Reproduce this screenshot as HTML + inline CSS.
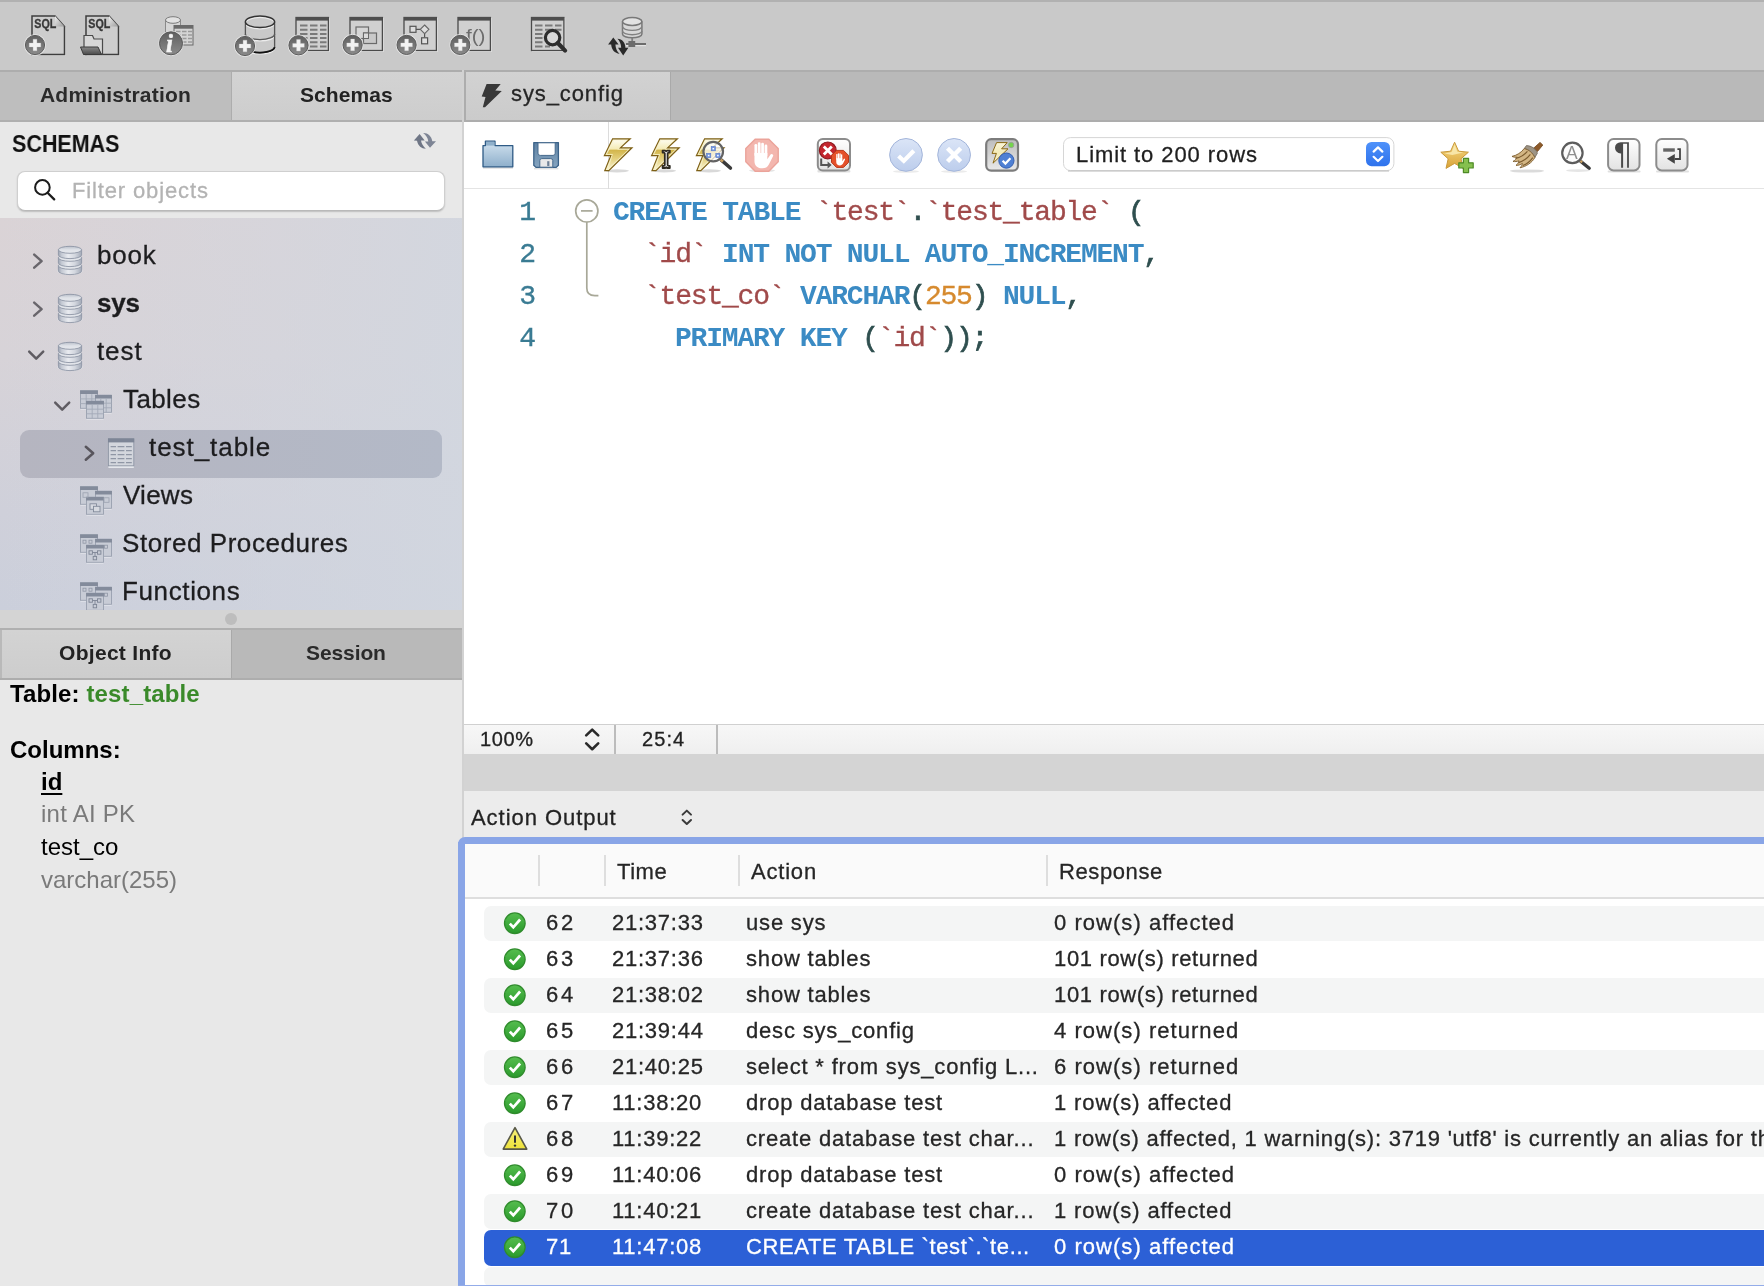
<!DOCTYPE html>
<html>
<head>
<meta charset="utf-8">
<title>MySQL Workbench</title>
<style>
*{box-sizing:border-box;margin:0;padding:0}
html,body{width:1764px;height:1286px;overflow:hidden;background:#e8e8e8}
body{font-family:"Liberation Sans",sans-serif;color:#222;position:relative}
.abs{position:absolute}
.t{position:absolute;white-space:nowrap;line-height:1}
#app{position:absolute;left:0;top:0;width:1764px;height:1286px;overflow:hidden}
.t,svg{will-change:transform}

/* top toolbar */
#topbar{left:0;top:0;width:1764px;height:70px;background:#c9c9c9;border-top:2px solid #b1b1b1}
#topline{left:0;top:70px;width:1764px;height:2px;background:#adadad}

/* side tabs */
#tabAdmin{left:0;top:72px;width:231px;height:48px;background:#bebebe}
#tabSchemas{left:232px;top:72px;width:230px;height:48px;background:linear-gradient(#d3d3d3,#cdcdcd)}
#tabSep{left:231px;top:72px;width:1px;height:48px;background:#adadad}
#sideTabLine{left:0;top:120px;width:462px;height:2px;background:#afafaf}

/* vertical splitter */
#vsplit{left:462px;top:70px;width:2px;height:1216px;background:#d2d2d2}
#vsplit2{left:464px;top:70px;width:2px;height:52px;background:#adadad}

/* editor tab bar */
#edTabBar{left:464px;top:72px;width:1300px;height:48px;background:#b9b9b9}
#edTab{left:466px;top:72px;width:205px;height:48px;background:linear-gradient(#d2d2d2,#cbcbcb);border-right:1px solid #a9a9a9}
#edTabLine{left:464px;top:120px;width:1300px;height:2px;background:#adadad}

/* editor toolbar */
#edTool{left:464px;top:122px;width:1300px;height:66px;background:#fff}
#edToolLine{left:464px;top:188px;width:1300px;height:2px;background:#e4e4e4}
#edToolV{left:608px;top:122px;width:1px;height:67px;background:#dcdcdc}

/* editor */
#editor{left:464px;top:189px;width:1300px;height:535px;background:#fff}
.code{font-family:"Liberation Mono",monospace;font-size:28px;letter-spacing:-1.2px}

/* editor status */
#edStatus{left:464px;top:724px;width:1300px;height:30px;background:linear-gradient(#f7f7f7,#efefef);border-top:1px solid #d0d0d0}
#gap{left:464px;top:754px;width:1300px;height:37px;background:#d4d4d4}
#aoBar{left:464px;top:791px;width:1300px;height:48px;background:#ececec}

/* output table */
#outBorderT{left:458px;top:837px;width:1306px;height:7px;background:#89a5e7;border-top-left-radius:8px}
#outBorderL{left:458px;top:842px;width:7px;height:444px;background:#89a5e7}
#outBorderB{left:458px;top:1284.500px;width:1306px;height:1.500px;background:#93ace9}
#outHead{left:465px;top:844px;width:1299px;height:55px;background:#fafafa;border-bottom:2px solid #dedede}
#outBody{left:465px;top:899px;width:1299px;height:387px;background:#fff}

/* sidebar */
#schemasHead{left:0;top:122px;width:462px;height:96px;background:#e8e8e8}
#tree{left:0;top:218px;width:462px;height:392px;background:linear-gradient(90deg,rgba(212,216,225,0) 0%,rgba(211,215,224,.5) 60%,rgba(210,215,224,.85) 100%),linear-gradient(180deg,#dad3d6 0%,#d7d3d8 35%,#cfd0da 75%,#cbcfdb 100%)}
#hsplit{left:0;top:610px;width:462px;height:18px;background:#d4d4d4}
#infoTabs{left:0;top:628px;width:462px;height:52px;background:#b9b9b9;border-top:2px solid #b0b0b0;border-bottom:2px solid #adadad}
#tabObj{left:2px;top:630px;width:229px;height:48px;background:linear-gradient(#d3d3d3,#cdcdcd)}
#info{left:0;top:680px;width:462px;height:606px;background:#e8e8e8}
.tr{font-size:26px;color:#1d1d1f}
.inf{font-size:24px}
.code{line-height:42px}
.ln{color:#3a7b93}
.k{color:#3b8bc4;font-weight:bold}
.i{color:#a04a4a}
.p{color:#2f4f4f}
.n{color:#d68a2e}
.cl{white-space:pre}
.ot{font-size:22px;color:#262626;letter-spacing:.45px}
.row{position:absolute;left:484px;width:1280px;height:36px;border-radius:7px 0 0 7px}
.ot,.tr,#tSysconfig,#tFilter,#tLimit,#tPct,#tPos,#tAO{-webkit-text-stroke:.3px currentColor}
.i,.n,.ln{-webkit-text-stroke:.35px currentColor}
.p{-webkit-text-stroke:.7px currentColor}
</style>
</head>
<body>
<div id="app">
<!-- TOPBAR -->
<div class="abs" id="topbar"></div>
<div class="abs" id="topline"></div>
<!-- SIDE TABS -->
<div class="abs" id="tabAdmin"></div>
<div class="abs" id="tabSchemas"></div>
<div class="abs" id="tabSep"></div>
<div class="abs" id="sideTabLine"></div>
<!-- EDITOR TABS -->
<div class="abs" id="edTabBar"></div>
<div class="abs" id="edTab"></div>
<div class="abs" id="edTabLine"></div>
<div class="abs" id="edTool"></div>
<div class="abs" id="edToolLine"></div>
<div class="abs" id="edToolV"></div>
<div class="abs" id="editor"></div>
<div class="abs" id="edStatus"></div>
<div class="abs" id="gap"></div>
<div class="abs" id="aoBar"></div>
<div class="abs" id="outHead"></div>
<div class="abs" id="outBody"></div>
<!-- SIDEBAR -->
<div class="abs" id="schemasHead"></div>
<div class="abs" id="tree"></div>
<div class="abs" id="hsplit"></div>
<div class="abs" id="infoTabs"></div>
<div class="abs" id="tabObj"></div>
<div class="abs" style="left:231px;top:630px;width:1px;height:48px;background:#a9a9a9"></div>
<div class="abs" id="info"></div>
<div class="abs" id="vsplit"></div>
<div class="abs" id="vsplit2"></div>
<div class="abs" id="outBorderT"></div>
<div class="abs" id="outBorderL"></div>

<svg class="abs" style="left:0;top:0" width="1764" height="70" viewBox="0 0 1764 70">
<defs>
<linearGradient id="pg" x1="0" y1="0" x2="0" y2="1"><stop offset="0" stop-color="#5f5f5f"/><stop offset="1" stop-color="#8b8b8b"/></linearGradient>
<linearGradient id="fold" x1="0" y1="0" x2="1" y2="1"><stop offset="0" stop-color="#efefef"/><stop offset="1" stop-color="#9a9a9a"/></linearGradient>
<linearGradient id="fd" x1="0" y1="0" x2="0" y2="1"><stop offset="0" stop-color="#8a8a8a"/><stop offset="1" stop-color="#4a4a4a"/></linearGradient>
</defs>
<!-- 1 SQL new -->
<g>
<path d="M32,16h23l9.5,10.5v28h-32.5z" fill="#cfcfcf" stroke="#e6e6e6" stroke-width="1" transform="translate(.8,.9)"/>
<path d="M32,16h23l9.5,10.5v28h-32.5z" fill="#cdcdcd" stroke="#3e3e3e" stroke-width="1.5"/>
<path d="M55,16v10.5h9.5z" fill="url(#fold)"/>
<text x="34.3" y="28.2" font-family="Liberation Sans" font-weight="bold" font-size="12.800" fill="#383838" stroke="#383838" stroke-width=".35" textLength="22" lengthAdjust="spacingAndGlyphs">SQL</text>
<g transform="translate(35,45)"><circle r="10.799999999999999" fill="#e9e9e9" opacity=".85"/><circle r="9.6" fill="url(#pg)" stroke="#5c5c5c" stroke-width="1"/><path d="M-1.9,-5.8h3.8v3.9h3.9v3.8h-3.9v3.9h-3.8v-3.9h-3.9v-3.8h3.9z" fill="#f2f2f2" stroke="#d0d0d0" stroke-width=".3"/></g>
</g>
<!-- 2 SQL open -->
<g>
<path d="M86,16h23l9.5,10.5v28h-32.5z" fill="#cfcfcf" stroke="#e6e6e6" stroke-width="1" transform="translate(.8,.9)"/>
<path d="M86,16h23l9.5,10.5v28h-32.5z" fill="#cdcdcd" stroke="#3e3e3e" stroke-width="1.5"/>
<path d="M109,16v10.5h9.5z" fill="url(#fold)"/>
<text x="88.3" y="28.2" font-family="Liberation Sans" font-weight="bold" font-size="12.800" fill="#383838" stroke="#383838" stroke-width=".35" textLength="22" lengthAdjust="spacingAndGlyphs">SQL</text>
<path d="M84,35.5h8.5l1.5,3.5h8.5v15h-18.5z" fill="#d8d8d8" stroke="#4a4a4a" stroke-width="1.2"/>
<path d="M80.5,47h17.5l3.5,7.5h-18z" fill="url(#fd)" stroke="#3a3a3a" stroke-width="1"/>
</g>
<!-- 3 info -->
<g>
<path d="M165.5,20v18a7.5,3.2 0 0 0 15,0v-18" fill="#d6d6d6" stroke="#8a8a8a" stroke-width="1"/>
<ellipse cx="173" cy="20" rx="7.5" ry="3.3" fill="#e2e2e2" stroke="#7a7a7a" stroke-width="1"/>
<rect x="174" y="25.5" width="19" height="19.5" fill="#d4d4d4" stroke="#6a6a6a" stroke-width="1"/>
<rect x="174" y="25.5" width="19" height="3.2" fill="#6a6a6a"/>
<g stroke="#9a9a9a" stroke-width="1.6"><path d="M176,31.5h4.5M182,31.5h4.5M188,31.5h4M176,35h4.5M182,35h4.5M188,35h4M176,38.5h4.5M182,38.5h4.5M188,38.5h4M182,42h4.5M188,42h4"/></g>
<circle cx="171" cy="43.3" r="12.6" fill="#e6e6e6" opacity=".8"/>
<circle cx="171" cy="43.3" r="11.5" fill="url(#pg)" stroke="#5a5a5a" stroke-width="1"/>
<text x="166" y="51.800" font-family="Liberation Serif" font-style="italic" font-weight="bold" font-size="25" fill="#f4f4f4" stroke="#f4f4f4" stroke-width=".5">i</text>
</g>
<!-- 4 DB + -->
<g fill="none">
<g stroke="#ececec" stroke-width="1.4" transform="translate(0,1.3)"><ellipse cx="260" cy="21.8" rx="14.6" ry="5.8"/><path d="M245.4,34a14.6,5.6 0 0 0 29.2,0"/><path d="M245.4,47a14.6,5.6 0 0 0 29.2,0"/></g>
<path d="M245.4,21.8v25.4a14.6,5.6 0 0 0 29.2,0v-25.4" stroke="#555" stroke-width="1.3"/>
<ellipse cx="260" cy="21.8" rx="14.6" ry="5.8" stroke="#333" stroke-width="1.5"/>
<path d="M245.4,34a14.6,5.6 0 0 0 29.2,0" stroke="#5a5a5a" stroke-width="1.4"/>
<path d="M252,51.6a14.6,5.6 0 0 0 22.6,-4.4" stroke="#111" stroke-width="1.8"/>
</g>
<g transform="translate(245,46)"><circle r="10.799999999999999" fill="#e9e9e9" opacity=".85"/><circle r="9.6" fill="url(#pg)" stroke="#5c5c5c" stroke-width="1"/><path d="M-1.9,-5.8h3.8v3.9h3.9v3.8h-3.9v3.9h-3.8v-3.9h-3.9v-3.8h3.9z" fill="#f2f2f2" stroke="#d0d0d0" stroke-width=".3"/></g>
<!-- 5 table + -->
<g>
<rect x="296" y="17.5" width="32.400" height="33" fill="#d2d2d2" stroke="#e8e8e8" stroke-width="1" transform="translate(.8,.9)"/>
<rect x="296" y="17.5" width="32.400" height="33" fill="#d0d0d0" stroke="#4a4a4a" stroke-width="1.3"/>
<rect x="296" y="17" width="32.400" height="3.600" fill="#4e4e4e"/>
<g stroke="#7a7a7a" stroke-width="2"><path d="M300,25.5h7.5M310,25.5h7.5M320,25.5h6.5M300,29.7h7.5M310,29.7h7.5M320,29.7h6.5M300,33.9h7.5M310,33.9h7.5M320,33.9h6.5M300,38.1h7.5M310,38.1h7.5M320,38.1h6.5M310,42.3h7.5M320,42.3h6.5M310,46.5h7.5M320,46.5h6.5"/></g>
</g>
<g transform="translate(298.5,45.3)"><circle r="10.799999999999999" fill="#e9e9e9" opacity=".85"/><circle r="9.6" fill="url(#pg)" stroke="#5c5c5c" stroke-width="1"/><path d="M-1.9,-5.8h3.8v3.9h3.9v3.8h-3.9v3.9h-3.8v-3.9h-3.9v-3.8h3.9z" fill="#f2f2f2" stroke="#d0d0d0" stroke-width=".3"/></g>
<!-- 6 view + -->
<g>
<rect x="350" y="17.5" width="32.400" height="33" fill="#d2d2d2" stroke="#e8e8e8" stroke-width="1" transform="translate(.8,.9)"/>
<rect x="350" y="17.5" width="32.400" height="33" fill="#d0d0d0" stroke="#4a4a4a" stroke-width="1.3"/>
<rect x="350" y="17" width="32.400" height="3.600" fill="#4e4e4e"/>
<rect x="356" y="27" width="12.5" height="11.5" fill="#d6d6d6" stroke="#6a6a6a" stroke-width="1.2"/>
<rect x="363.5" y="33" width="13" height="10.5" fill="#c9c9c9" stroke="#6a6a6a" stroke-width="1.2"/>
<rect x="363.5" y="33" width="5" height="5.5" fill="#dcdcdc" stroke="#6a6a6a" stroke-width="1"/>
</g>
<g transform="translate(352.6,44.9)"><circle r="10.799999999999999" fill="#e9e9e9" opacity=".85"/><circle r="9.6" fill="url(#pg)" stroke="#5c5c5c" stroke-width="1"/><path d="M-1.9,-5.8h3.8v3.9h3.9v3.8h-3.9v3.9h-3.8v-3.9h-3.9v-3.8h3.9z" fill="#f2f2f2" stroke="#d0d0d0" stroke-width=".3"/></g>
<!-- 7 proc + -->
<g>
<rect x="404" y="17.5" width="32.400" height="33" fill="#d2d2d2" stroke="#e8e8e8" stroke-width="1" transform="translate(.8,.9)"/>
<rect x="404" y="17.5" width="32.400" height="33" fill="#d0d0d0" stroke="#4a4a4a" stroke-width="1.3"/>
<rect x="404" y="17" width="32.400" height="3.600" fill="#4e4e4e"/>
<rect x="410" y="26.3" width="6" height="6" fill="#dedede" stroke="#555" stroke-width="1.2"/>
<path d="M416,29.3h4M424.6,33.5v4" stroke="#555" stroke-width="1.2"/>
<path d="M424.6,25l4.3,4.3l-4.3,4.3l-4.3,-4.3z" fill="#dedede" stroke="#666" stroke-width="1.1"/>
<rect x="421.6" y="37.8" width="6" height="6" fill="#dedede" stroke="#555" stroke-width="1.2"/>
</g>
<g transform="translate(406.6,44.9)"><circle r="10.799999999999999" fill="#e9e9e9" opacity=".85"/><circle r="9.6" fill="url(#pg)" stroke="#5c5c5c" stroke-width="1"/><path d="M-1.9,-5.8h3.8v3.9h3.9v3.8h-3.9v3.9h-3.8v-3.9h-3.9v-3.8h3.9z" fill="#f2f2f2" stroke="#d0d0d0" stroke-width=".3"/></g>
<!-- 8 func + -->
<g>
<rect x="458" y="17.5" width="32.400" height="33" fill="#d2d2d2" stroke="#e8e8e8" stroke-width="1" transform="translate(.8,.9)"/>
<rect x="458" y="17.5" width="32.400" height="33" fill="#d0d0d0" stroke="#4a4a4a" stroke-width="1.3"/>
<rect x="458" y="17" width="32.400" height="3.600" fill="#4e4e4e"/>
<text x="466" y="41.500" font-family="Liberation Sans" font-size="17.500" fill="#6c6c6c" textLength="19.500" lengthAdjust="spacingAndGlyphs">f()</text>
</g>
<g transform="translate(460.3,44.9)"><circle r="10.799999999999999" fill="#e9e9e9" opacity=".85"/><circle r="9.6" fill="url(#pg)" stroke="#5c5c5c" stroke-width="1"/><path d="M-1.9,-5.8h3.8v3.9h3.9v3.8h-3.9v3.9h-3.8v-3.9h-3.9v-3.8h3.9z" fill="#f2f2f2" stroke="#d0d0d0" stroke-width=".3"/></g>
<!-- 9 search -->
<g>
<rect x="531.5" y="17.5" width="32.400" height="33" fill="#d2d2d2" stroke="#e8e8e8" stroke-width="1" transform="translate(.8,.9)"/>
<rect x="531.5" y="17.5" width="32.400" height="33" fill="#d0d0d0" stroke="#4a4a4a" stroke-width="1.3"/>
<rect x="531.5" y="17" width="32.400" height="3.600" fill="#4e4e4e"/>
<g stroke="#7a7a7a" stroke-width="2"><path d="M535,25.5h7.5M545,25.5h7.5M555,25.5h6.5M535,29.7h7.5M545,29.7h7.5M555,29.7h6.5M535,33.9h7.5M535,38.1h7.5M535,42.3h7.5M535,46.5h7.5M545,46.5h5"/></g>
<circle cx="552.6" cy="37.6" r="7.2" fill="#d9d9d9" stroke="#2e2e2e" stroke-width="3.2"/>
<path d="M557.8,43l7.3,7.6" stroke="#2e2e2e" stroke-width="4.2" stroke-linecap="round"/>
</g>
<!-- 10 reconnect -->
<g>
<path d="M622.500,21.500v12.500a9.700,3.800 0 0 0 19.400,0v-12.500" fill="#d8d8d8" stroke="#787878" stroke-width="1.500"/>
<ellipse cx="632.200" cy="21.500" rx="9.700" ry="3.900" fill="#e2e2e2" stroke="#787878" stroke-width="1.500"/>
<path d="M622.500,26.600a9.700,3.800 0 0 0 19.400,0M622.500,31a9.700,3.800 0 0 0 19.400,0" fill="none" stroke="#808080" stroke-width="1.400"/>
<path d="M632.200,38v3.500" stroke="#808080" stroke-width="1.800"/>
<path d="M626,44h20" stroke="#e4e4e4" stroke-width="1.200" transform="translate(0,1.600)"/>
<path d="M626,44h20" stroke="#6c6c6c" stroke-width="2"/>
<rect x="628.400" y="41" width="6.800" height="6" fill="#6c6c6c"/>
<g fill="#2a2a2a">
<path d="M613.300,37.400L618.600,44.600L615.400,44.600C615.600,48.600 617,51.600 619.600,53.800C614.800,53.400 611.400,49.800 611.200,44.600L608.100,44.600Z"/>
<path d="M617.400,38.800C622.200,39 625.400,42.600 625.400,47.800L628.400,47.800L623.200,55.400L618,47.800L621.200,47.800C621,44 619.800,41 617.400,38.800Z"/>
</g>
</g>
</svg>

<div class="t" style="left:40px;top:84px;font-size:21px;font-weight:bold;color:#2a2a2a;letter-spacing:.2px" id="tAdmin">Administration</div>
<div class="t" style="left:300px;top:84px;font-size:21px;font-weight:bold;color:#222;letter-spacing:.06px" id="tSchemas">Schemas</div>
<svg class="abs" style="left:478px;top:80px" width="30" height="32" viewBox="478 80 30 32"><path d="M486.6,84.1h14.1l-5.4,6.4l6.5,.6l-16.8,16.1h-2.2l2.7,-10.2l-3.8,-.5z" fill="#383838"/></svg>
<div class="t" style="left:511px;top:83px;font-size:22px;color:#262626;letter-spacing:.9px" id="tSysconfig">sys_config</div>
<div class="t" style="left:12px;top:133px;font-size:23.5px;font-weight:bold;color:#111;transform:scaleX(.915);transform-origin:0 0" id="tSCHEMAS">SCHEMAS</div>

<div class="abs" style="left:17px;top:171px;width:428px;height:40px;background:#fff;border:1px solid #cfcfcf;border-bottom-color:#b9b9b9;border-radius:8px;box-shadow:0 1px 1.5px rgba(0,0,0,.18)"></div>
<svg class="abs" style="left:30px;top:176px" width="30" height="30" viewBox="30 176 30 30"><circle cx="42.4" cy="187.4" r="7.3" fill="none" stroke="#1c1c1c" stroke-width="2"/><path d="M47.8,193l6.4,6.4" stroke="#1c1c1c" stroke-width="2.3" stroke-linecap="round"/></svg>
<div class="t" style="left:72px;top:180px;font-size:22px;color:#b3b3b3;letter-spacing:.86px" id="tFilter">Filter objects</div>
<svg class="abs" style="left:410px;top:128px" width="30" height="28" viewBox="410 128 30 28"><path d="M419.6,133.9L424.7,140.4L421,140.600C421.5,143.500 423,146.500 425.800,148.700C421.800,148.800 418,146 417,140.700L413.900,140.400Z" fill="#6f7686"/><path d="M423.200,133.100C427.500,132.800 431.500,136 432.300,141.300L436,141.300L430,147.800L424.900,141.600L428.300,141.400C427.800,138 426,135.200 423.200,133.100Z" fill="#7e8595"/></svg>
<div class="abs" style="left:20px;top:430px;width:422px;height:48px;border-radius:9px;background:linear-gradient(90deg,#b5b5c0,#b3b9c7)"></div>
<svg class="abs" style="left:0;top:218px" width="462" height="392" viewBox="0 218 462 392">
<defs>
<linearGradient id="dbg" x1="0" y1="0" x2="1" y2="0"><stop offset="0" stop-color="#9fa6b4"/><stop offset=".14" stop-color="#c4c9d3"/><stop offset=".42" stop-color="#e9ebf0"/><stop offset=".72" stop-color="#d2d6de"/><stop offset="1" stop-color="#a2a9b7"/></linearGradient>
<linearGradient id="dbt" x1="0" y1="0" x2="0" y2="1"><stop offset="0" stop-color="#b9bfca"/><stop offset=".5" stop-color="#dfe2e8"/><stop offset="1" stop-color="#e6e8ed"/></linearGradient>
</defs>
<g transform="translate(58,245.2)"><ellipse cx="12" cy="25.6" rx="12.6" ry="4.2" fill="#eef0f4" opacity=".8"/><path d="M0.4,20.599999999999998v5.2a11.6,3.6 0 0 0 23.2,0v-5.2z" fill="url(#dbg)" stroke="#8f96a6" stroke-width=".9"/><ellipse cx="12" cy="20.599999999999998" rx="11.6" ry="3.5" fill="url(#dbt)" stroke="#8f96a6" stroke-width=".9"/><path d="M0.4,12.6v5.2a11.6,3.6 0 0 0 23.2,0v-5.2z" fill="url(#dbg)" stroke="#8f96a6" stroke-width=".9"/><ellipse cx="12" cy="12.6" rx="11.6" ry="3.5" fill="url(#dbt)" stroke="#8f96a6" stroke-width=".9"/><path d="M0.4,4.6v5.2a11.6,3.6 0 0 0 23.2,0v-5.2z" fill="url(#dbg)" stroke="#8f96a6" stroke-width=".9"/><ellipse cx="12" cy="4.6" rx="11.6" ry="3.5" fill="url(#dbt)" stroke="#8f96a6" stroke-width=".9"/></g><g transform="translate(58,293.2)"><ellipse cx="12" cy="25.6" rx="12.6" ry="4.2" fill="#eef0f4" opacity=".8"/><path d="M0.4,20.599999999999998v5.2a11.6,3.6 0 0 0 23.2,0v-5.2z" fill="url(#dbg)" stroke="#8f96a6" stroke-width=".9"/><ellipse cx="12" cy="20.599999999999998" rx="11.6" ry="3.5" fill="url(#dbt)" stroke="#8f96a6" stroke-width=".9"/><path d="M0.4,12.6v5.2a11.6,3.6 0 0 0 23.2,0v-5.2z" fill="url(#dbg)" stroke="#8f96a6" stroke-width=".9"/><ellipse cx="12" cy="12.6" rx="11.6" ry="3.5" fill="url(#dbt)" stroke="#8f96a6" stroke-width=".9"/><path d="M0.4,4.6v5.2a11.6,3.6 0 0 0 23.2,0v-5.2z" fill="url(#dbg)" stroke="#8f96a6" stroke-width=".9"/><ellipse cx="12" cy="4.6" rx="11.6" ry="3.5" fill="url(#dbt)" stroke="#8f96a6" stroke-width=".9"/></g><g transform="translate(58,341.2)"><ellipse cx="12" cy="25.6" rx="12.6" ry="4.2" fill="#eef0f4" opacity=".8"/><path d="M0.4,20.599999999999998v5.2a11.6,3.6 0 0 0 23.2,0v-5.2z" fill="url(#dbg)" stroke="#8f96a6" stroke-width=".9"/><ellipse cx="12" cy="20.599999999999998" rx="11.6" ry="3.5" fill="url(#dbt)" stroke="#8f96a6" stroke-width=".9"/><path d="M0.4,12.6v5.2a11.6,3.6 0 0 0 23.2,0v-5.2z" fill="url(#dbg)" stroke="#8f96a6" stroke-width=".9"/><ellipse cx="12" cy="12.6" rx="11.6" ry="3.5" fill="url(#dbt)" stroke="#8f96a6" stroke-width=".9"/><path d="M0.4,4.6v5.2a11.6,3.6 0 0 0 23.2,0v-5.2z" fill="url(#dbg)" stroke="#8f96a6" stroke-width=".9"/><ellipse cx="12" cy="4.6" rx="11.6" ry="3.5" fill="url(#dbt)" stroke="#8f96a6" stroke-width=".9"/></g><path d="M34.2,254.6l7.4,6.5l-7.4,6.5" fill="none" stroke="#69666c" stroke-width="2.5" stroke-linecap="round" stroke-linejoin="round"/><path d="M34.2,302.59999999999997l7.4,6.5l-7.4,6.5" fill="none" stroke="#69666c" stroke-width="2.5" stroke-linecap="round" stroke-linejoin="round"/><path d="M29.2,351.59999999999997l7,7l7,-7" fill="none" stroke="#5f5c62" stroke-width="2.5" stroke-linecap="round" stroke-linejoin="round"/><path d="M55.2,402.59999999999997l7,7l7,-7" fill="none" stroke="#5f5c62" stroke-width="2.5" stroke-linecap="round" stroke-linejoin="round"/><path d="M85.8,446.8l7.4,6.5l-7.4,6.5" fill="none" stroke="#58555c" stroke-width="2.5" stroke-linecap="round" stroke-linejoin="round"/><g transform="translate(0,.8)"><rect x="80.5" y="391.2" width="17" height="17.5" fill="#eceef2"/><rect x="80.5" y="390" width="17" height="17.5" fill="#c8ccd6" stroke="#989fae" stroke-width=".9"/><rect x="80.1" y="389.6" width="17.8" height="3.600" fill="#838b9b"/><g stroke="#a4aab8" stroke-width=".9"><path d="M86.2,393.4v14.1"/><path d="M91.8,393.4v14.1"/><path d="M80.5,398.1h17"/><path d="M80.5,402.8h17"/></g><rect x="95.5" y="395.7" width="16" height="17" fill="#eceef2"/><rect x="95.5" y="394.5" width="16" height="17" fill="#c8ccd6" stroke="#989fae" stroke-width=".9"/><rect x="95.1" y="394.1" width="16.8" height="3.600" fill="#838b9b"/><g stroke="#a4aab8" stroke-width=".9"><path d="M100.8,397.9v13.6"/><path d="M106.2,397.9v13.6"/><path d="M95.5,402.4h16"/><path d="M95.5,407.0h16"/></g><rect x="86.5" y="401.7" width="17" height="17" fill="#eceef2"/><rect x="86.5" y="400.5" width="17" height="17" fill="#c8ccd6" stroke="#989fae" stroke-width=".9"/><rect x="86.1" y="400.1" width="17.8" height="3.600" fill="#838b9b"/><g stroke="#a4aab8" stroke-width=".9"><path d="M92.2,403.9v13.6"/><path d="M97.8,403.9v13.6"/><path d="M86.5,408.4h17"/><path d="M86.5,413.0h17"/></g><rect x="80.5" y="487.2" width="17" height="17.5" fill="#eceef2"/><rect x="80.5" y="486" width="17" height="17.5" fill="#c8ccd6" stroke="#989fae" stroke-width=".9"/><rect x="80.1" y="485.6" width="17.8" height="3.600" fill="#838b9b"/><rect x="95.5" y="491.7" width="16" height="17" fill="#eceef2"/><rect x="95.5" y="490.5" width="16" height="17" fill="#c8ccd6" stroke="#989fae" stroke-width=".9"/><rect x="95.1" y="490.1" width="16.8" height="3.600" fill="#838b9b"/><rect x="86.5" y="497.7" width="17" height="17" fill="#eceef2"/><rect x="86.5" y="496.5" width="17" height="17" fill="#c8ccd6" stroke="#989fae" stroke-width=".9"/><rect x="86.1" y="496.1" width="17.8" height="3.600" fill="#838b9b"/><rect x="90" y="503" width="6.5" height="5.5" fill="#d6d9e0" stroke="#828a9a" stroke-width=".9"/><rect x="93.5" y="505.5" width="6.5" height="5.5" fill="#d6d9e0" stroke="#828a9a" stroke-width=".9"/><rect x="83" y="492" width="5" height="4.5" fill="none" stroke="#9aa1af" stroke-width=".8"/><rect x="104" y="497" width="5" height="4.5" fill="none" stroke="#9aa1af" stroke-width=".8"/><rect x="80.5" y="535.2" width="17" height="17.5" fill="#eceef2"/><rect x="80.5" y="534" width="17" height="17.5" fill="#c8ccd6" stroke="#989fae" stroke-width=".9"/><rect x="80.1" y="533.6" width="17.8" height="3.600" fill="#838b9b"/><rect x="95.5" y="539.7" width="16" height="17" fill="#eceef2"/><rect x="95.5" y="538.5" width="16" height="17" fill="#c8ccd6" stroke="#989fae" stroke-width=".9"/><rect x="95.1" y="538.1" width="16.8" height="3.600" fill="#838b9b"/><rect x="86.5" y="545.7" width="17" height="17" fill="#eceef2"/><rect x="86.5" y="544.5" width="17" height="17" fill="#c8ccd6" stroke="#989fae" stroke-width=".9"/><rect x="86.1" y="544.1" width="17.8" height="3.600" fill="#838b9b"/><g fill="none" stroke="#7d8595" stroke-width=".9"><rect x="89" y="550" width="3.4" height="3.4"/><rect x="97.5" y="550" width="3.4" height="3.4"/><rect x="93.2" y="555.6" width="3.4" height="3.4"/><path d="M92.4,551.7h5M95,552v3.6"/></g><g fill="none" stroke="#8f96a5" stroke-width=".8"><rect x="83" y="539.4" width="3" height="3"/><rect x="89" y="539.4" width="3" height="3"/><rect x="104.5" y="544.4" width="3" height="3"/></g><rect x="80.5" y="583.2" width="17" height="17.5" fill="#eceef2"/><rect x="80.5" y="582" width="17" height="17.5" fill="#c8ccd6" stroke="#989fae" stroke-width=".9"/><rect x="80.1" y="581.6" width="17.8" height="3.600" fill="#838b9b"/><rect x="95.5" y="587.7" width="16" height="17" fill="#eceef2"/><rect x="95.5" y="586.5" width="16" height="17" fill="#c8ccd6" stroke="#989fae" stroke-width=".9"/><rect x="95.1" y="586.1" width="16.8" height="3.600" fill="#838b9b"/><rect x="86.5" y="593.7" width="17" height="17" fill="#eceef2"/><rect x="86.5" y="592.5" width="17" height="17" fill="#c8ccd6" stroke="#989fae" stroke-width=".9"/><rect x="86.1" y="592.1" width="17.8" height="3.600" fill="#838b9b"/><g fill="none" stroke="#7d8595" stroke-width=".9"><rect x="89" y="598" width="3.4" height="3.4"/><rect x="97.5" y="598" width="3.4" height="3.4"/><rect x="93.2" y="603.6" width="3.4" height="3.4"/><path d="M92.4,599.7h5M95,600v3.6"/></g><g fill="none" stroke="#8f96a5" stroke-width=".8"><rect x="83" y="587.4" width="3" height="3"/><rect x="89" y="587.4" width="3" height="3"/><rect x="104.5" y="592.4" width="3" height="3"/></g></g><rect x="108.4" y="440" width="25.4" height="28" fill="#e4e6eb"/><rect x="108.4" y="438.8" width="25.4" height="27" fill="#d3d6dd" stroke="#8d94a3" stroke-width=".9"/><rect x="108" y="438.4" width="26.2" height="4" fill="#7d8596"/><g stroke="#8f96a5" stroke-width="1.3"><path d="M110.6,446.6h5.4M117.6,446.6h6.8M126,446.6h5.8"/><path d="M110.6,450.6h5.4M117.6,450.6h6.8M126,450.6h5.8"/><path d="M110.6,454.6h5.4M117.6,454.6h6.8M126,454.6h5.8"/><path d="M110.6,458.6h5.4M117.6,458.6h6.8M126,458.6h5.8"/><path d="M110.6,462.6h5.4M117.6,462.6h6.8M126,462.6h5.8"/></g></svg>
<div class="t tr" style="left:96.5px;top:242px;letter-spacing:0.8px" id="tr0">book</div>
<div class="t tr" style="left:96.5px;top:290px;font-weight:bold;letter-spacing:-0.2px" id="tr1">sys</div>
<div class="t tr" style="left:96.5px;top:338px;letter-spacing:0.9px" id="tr2">test</div>
<div class="t tr" style="left:122.5px;top:386px;letter-spacing:0.4px" id="tr3">Tables</div>
<div class="t tr" style="left:148.5px;top:434px;letter-spacing:0.95px" id="tr4">test_table</div>
<div class="t tr" style="left:122.5px;top:482px;letter-spacing:0.25px" id="tr5">Views</div>
<div class="t tr" style="left:121.500px;top:530px;letter-spacing:0.56px" id="tr6">Stored Procedures</div>
<div class="t tr" style="left:122px;top:578px;letter-spacing:0.62px" id="tr7">Functions</div>
<div class="abs" style="left:225px;top:612.500px;width:12px;height:12px;border-radius:6px;background:#bdbdbd"></div>

<div class="t" style="left:59px;top:642px;font-size:21px;font-weight:bold;color:#222;letter-spacing:.3px" id="tObj">Object Info</div>
<div class="t" style="left:306px;top:642px;font-size:21px;font-weight:bold;color:#2a2a2a;letter-spacing:-.1px" id="tSess">Session</div>
<div class="t inf" style="left:10px;top:682px;font-weight:bold;color:#000;letter-spacing:.13px" id="tTable">Table: <span style="color:#3a8a2a">test_table</span></div>
<div class="t inf" style="left:10px;top:738px;font-weight:bold;color:#000" id="tCols">Columns:</div>
<div class="t inf" style="left:41px;top:769.500px;font-weight:bold;color:#000;text-decoration:underline;text-decoration-thickness:2px;text-underline-offset:2.500px" id="tId">id</div>
<div class="t inf" style="left:41px;top:802px;color:#7a7a7a;letter-spacing:.25px" id="tInt">int AI PK</div>
<div class="t inf" style="left:41px;top:835px;color:#000" id="tCo">test_co</div>
<div class="t inf" style="left:41px;top:868px;color:#7a7a7a" id="tVar">varchar(255)</div>

<svg class="abs" style="left:464px;top:122px" width="1300" height="66" viewBox="464 122 1300 66">
<defs>
<linearGradient id="fo" x1="0" y1="0" x2="0" y2="1"><stop offset="0" stop-color="#d3e3f0"/><stop offset="1" stop-color="#8eafcb"/></linearGradient>
<linearGradient id="sv" x1="0" y1="0" x2="0" y2="1"><stop offset="0" stop-color="#5d81a3"/><stop offset="1" stop-color="#86a5c0"/></linearGradient>
<linearGradient id="bg1" x1="0" y1="0" x2="0" y2="1"><stop offset="0" stop-color="#faf6da"/><stop offset=".5" stop-color="#f3eab6"/><stop offset="1" stop-color="#f8f2cc"/></linearGradient>
<linearGradient id="bg2" x1="0" y1="0" x2="0" y2="1"><stop offset="0" stop-color="#fdfbea"/><stop offset=".3" stop-color="#f4ebb6"/><stop offset=".35" stop-color="#d3b64c"/><stop offset=".62" stop-color="#e2cd78"/><stop offset="1" stop-color="#f6efc6"/></linearGradient>
<linearGradient id="bc" x1="0" y1="0" x2="0" y2="1"><stop offset="0" stop-color="#dbe5f7"/><stop offset="1" stop-color="#bccdec"/></linearGradient>
<linearGradient id="btn" x1="0" y1="0" x2="0" y2="1"><stop offset="0" stop-color="#ffffff"/><stop offset="1" stop-color="#e2e2e2"/></linearGradient>
<linearGradient id="btnp" x1="0" y1="0" x2="0" y2="1"><stop offset="0" stop-color="#bdbdbd"/><stop offset="1" stop-color="#e9e9e9"/></linearGradient>
<linearGradient id="blu" x1="0" y1="0" x2="0" y2="1"><stop offset="0" stop-color="#4f92fa"/><stop offset="1" stop-color="#2e72ec"/></linearGradient>
<linearGradient id="star" x1="0" y1="0" x2="0" y2="1"><stop offset="0" stop-color="#f6dc8a"/><stop offset="1" stop-color="#d9a236"/></linearGradient>
</defs>
<!-- folder -->
<rect x="483" y="167.2" width="30" height="1.6" fill="#000" opacity=".12"/>
<path d="M483,145.6h2.4v-4.4h9.6v4.4h17.8v21.2h-29.8z" fill="url(#fo)" stroke="#2f5b86" stroke-width="1.3" stroke-linejoin="round"/>
<rect x="486" y="141.8" width="8.4" height="3.8" fill="#8fb0cb"/>
<!-- save -->
<rect x="534" y="168" width="24.4" height="1.4" fill="#000" opacity=".12"/>
<path d="M533.8,142.6h24.6v22.6l-2.2,2.2h-20.2l-2.2,-2.2z" fill="url(#sv)" stroke="#3b6288" stroke-width="1.3" stroke-linejoin="round"/>
<path d="M538,142.8h17.2v10.4a2.2,2.2 0 0 1 -2.2,2.2h-12.8a2.2,2.2 0 0 1 -2.2,-2.2z" fill="#fff" stroke="#45698c" stroke-width="1"/>
<path d="M539.8,167.2v-6.6a2,2 0 0 1 2,-2h9a2,2 0 0 1 2,2v6.6z" fill="#e9e9e9" stroke="#45698c" stroke-width="1"/>
<rect x="547.2" y="161.2" width="2.2" height="4.8" fill="#6f8196"/>
<!-- bolts -->
<ellipse cx="617" cy="170.800" rx="12" ry="1.600" fill="#000" opacity=".15"/><path d="M612.6,138.8 L630.2,138.8 L620.4,147.8 L632.0,147.8 L608.8,170.6 L604.8,170.6 L610.8,155.6 L604.4,155.6z" fill="url(#bg1)" stroke="#7e6016" stroke-width="1.200" stroke-linejoin="miter"/><path d="M614.2,140.6 L626.4,140.6 L617.2,149.4 L628.2,149.4 L608.4,168.4 L612.9,153.9 L607.0,153.9z" fill="url(#bg2)"/>
<ellipse cx="664.2" cy="170.800" rx="12" ry="1.600" fill="#000" opacity=".15"/><path d="M659.8,138.8 L677.4,138.8 L667.6,147.8 L679.2,147.8 L656.0,170.6 L652.0,170.6 L658.0,155.6 L651.6,155.6z" fill="url(#bg1)" stroke="#7e6016" stroke-width="1.200" stroke-linejoin="miter"/><path d="M661.4,140.6 L673.6,140.6 L664.4,149.4 L675.4,149.4 L655.6,168.4 L660.1,153.9 L654.2,153.9z" fill="url(#bg2)"/>
<path d="M662.6,150.6h2.6l1,.8l1,-.8h2.6v2h-1.4l-.8,.8v11.6l.8,.8h1.4v2.2h-2.6l-1,-.8l-1,.8h-2.6v-2.2h1.4l.8,-.8v-11.6l-.8,-.8h-1.4z" fill="#fff" stroke="#2e2a22" stroke-width="1.800" stroke-linejoin="round"/>
<ellipse cx="709" cy="170.800" rx="12" ry="1.600" fill="#000" opacity=".15"/><path d="M704.6,138.8 L722.2,138.8 L712.4,147.8 L724.0,147.8 L700.8,170.6 L696.8,170.6 L702.8,155.6 L696.4,155.6z" fill="url(#bg1)" stroke="#7e6016" stroke-width="1.200" stroke-linejoin="miter"/><path d="M706.2,140.6 L718.4,140.6 L709.2,149.4 L720.2,149.4 L700.4,168.4 L704.9,153.9 L699.0,153.9z" fill="url(#bg2)"/>
<path d="M721.4,160.2l9,7.8" stroke="#3a3a3a" stroke-width="3.6" stroke-linecap="round"/>
<path d="M720.4,159.4l2.6,2.2" stroke="#c9a063" stroke-width="2.6"/>
<circle cx="713.2" cy="151.6" r="9.8" fill="#fdfdfd" fill-opacity=".72" stroke="#636363" stroke-width="2.200"/>
<g fill="#7396de" stroke="#5577c8" stroke-width=".6"><rect x="711.2" y="146.6" width="4.2" height="4.2"/><rect x="706.6" y="153.4" width="4.2" height="4.2"/><rect x="715.8" y="153.4" width="4.2" height="4.2"/></g>
<g fill="#fff"><rect x="712.5" y="148" width="1.6" height="1.5"/><rect x="707.9" y="154.8" width="1.6" height="1.5"/><rect x="717.1" y="154.8" width="1.6" height="1.5"/></g>
<!-- stop -->
<ellipse cx="762" cy="170.6" rx="13" ry="1.6" fill="#000" opacity=".1"/>
<path d="M755.200,139.200h13.600l9.400,9.400v13.200l-9.400,9.400h-13.600l-9.400,-9.400v-13.200z" fill="#f3b6ae" stroke="#eba39a" stroke-width="1.400"/>
<g transform="translate(761.600,155.600) scale(1.020)"><g fill="#fff"><rect x="-7" y="-11.400" width="2.700" height="12" rx="1.300"/><rect x="-3.700" y="-13" width="2.700" height="14" rx="1.300"/><rect x="-.4" y="-12.600" width="2.700" height="14" rx="1.300"/><rect x="2.900" y="-10.800" width="2.700" height="12" rx="1.300"/><path d="M-7,-2.500H5.600V3.600l3,-4.400a1.500,1.500 0 0 1 2.600,1.500l-4.100,8.100c-1.400,2.600 -3.400,3.700 -6.300,3.700c-4.700,0 -7.800,-2.500 -7.800,-7z"/></g></g>
<!-- stop on error toggle -->
<rect x="817.4" y="170" width="33" height="2.4" rx="1" fill="#000" opacity=".12"/>
<rect x="817.8" y="139" width="32.2" height="31.4" rx="5" fill="url(#btn)" stroke="#8c8c8c" stroke-width="2"/>
<path d="M822.2,160.6v5.4h5.4v-2.6l4,3.6l-4,3.6v-2.6h-7.4v-7.4z" fill="#555" transform="translate(0,-2)"/>
<circle cx="827.8" cy="150.4" r="8.4" fill="#c4262e" stroke="#8e1a20" stroke-width="1.2"/>
<path d="M823.8,146.4l8,8M831.8,146.4l-8,8" stroke="#fff" stroke-width="2.8"/>
<path d="M836.5,150.400h7l5,5v7l-5,5h-7l-5,-5v-7z" fill="#e4502a" stroke="#b8381a" stroke-width="1"/>
<g transform="translate(839.600,159.400) scale(.48)"><g fill="#fff"><rect x="-7" y="-11.400" width="2.700" height="12" rx="1.300"/><rect x="-3.700" y="-13" width="2.700" height="14" rx="1.300"/><rect x="-.4" y="-12.600" width="2.700" height="14" rx="1.300"/><rect x="2.900" y="-10.800" width="2.700" height="12" rx="1.300"/><path d="M-7,-2.500H5.600V3.600l3,-4.400a1.500,1.500 0 0 1 2.600,1.500l-4.100,8.100c-1.400,2.600 -3.400,3.700 -6.300,3.700c-4.700,0 -7.800,-2.500 -7.800,-7z"/></g></g>
<!-- commit -->
<ellipse cx="906" cy="171.4" rx="13" ry="1.4" fill="#000" opacity=".08"/>
<circle cx="906" cy="154.900" r="16.400" fill="url(#bc)" stroke="#a3b5da" stroke-width="1"/>
<path d="M898.600,155.900l5.200,5l10,-10.200" fill="none" stroke="#fff" stroke-width="4.2"/>
<!-- rollback -->
<ellipse cx="954.1" cy="171.4" rx="13" ry="1.4" fill="#000" opacity=".08"/>
<circle cx="954.1" cy="154.900" r="16.400" fill="url(#bc)" stroke="#a3b5da" stroke-width="1"/>
<path d="M947.500,148.300l13.200,13.200M960.700,148.300l-13.200,13.200" stroke="#fff" stroke-width="4.4"/>
<!-- autocommit -->
<rect x="986.2" y="139.2" width="31.8" height="31.4" rx="5" fill="url(#btnp)" stroke="#7c7c7c" stroke-width="2.2"/>
<path d="M996.6,142.6h10.6l-5.6,6.2h6.4l-15,14.4l3.4,-9.8h-4.4z" fill="url(#bg1)" stroke="#8b6914" stroke-width="1"/>
<circle cx="1006.4" cy="160.6" r="7.6" fill="#4f80d4" stroke="#3560b0" stroke-width="1"/>
<path d="M1002.6,160.8l2.8,2.8l5,-5.4" fill="none" stroke="#fff" stroke-width="2.2"/>
<circle cx="1011.2" cy="145" r="2.7" fill="#74d44c" stroke="#9a9a9a" stroke-width=".8"/>
<!-- dropdown -->
<rect x="1063.5" y="137.6" width="330.4" height="33" rx="7" fill="#fff" stroke="#d6d6d6" stroke-width="1"/>
<path d="M1068,171h321" stroke="#bdbdbd" stroke-width="1.2"/>
<rect x="1366" y="142" width="24" height="24.2" rx="5.5" fill="url(#blu)"/>
<path d="M1373.6,151.6l4.4,-4.2l4.4,4.2M1373.6,156.8l4.4,4.2l4.4,-4.2" fill="none" stroke="#fff" stroke-width="2.2" stroke-linecap="round" stroke-linejoin="round"/>
<!-- star -->
<path d="M1454.6,142.2l4,9l9.8,1l-7.4,6.6l2.2,9.6l-8.6,-5l-8.6,5l2.2,-9.6l-7.4,-6.6l9.8,-1z" fill="url(#star)" stroke="#c9993a" stroke-width="1" stroke-linejoin="round"/>
<path d="M1454.6,145l2.8,6.8l6,.8l-11,2.4l-8,-1.6l7.2,-1.4z" fill="#fbeeb8" opacity=".8"/>
<path d="M1463.4,158.4h5.2v4.4h4.6v5.2h-4.6v4.6h-5.2v-4.6h-4.6v-5.2h4.6z" fill="#85c04e" stroke="#4e8a26" stroke-width="1.2" stroke-linejoin="round"/>
<!-- broom -->
<ellipse cx="1527" cy="171" rx="17" ry="1.6" fill="#000" opacity=".14"/>
<path d="M1533.6,148.2l6.4,-5.8l2.8,2.6l-5.4,6.6z" fill="#8d5a2a" stroke="#6d4218" stroke-width=".8"/>
<path d="M1526.4,145.6c4.6,0 9.4,3 11,7.6l-2.6,4.4c-2,-4.6 -6,-8 -10.6,-9z" fill="#9d9485" stroke="#6e6558" stroke-width=".8"/>
<path d="M1524.2,148.6c4.8,1 8.6,4.400 10.600,9c-3,5.400 -8.600,8.800 -14.800,10.200c1.600,-1.800 2.200,-3 2.400,-4.400c-2,1.400 -4.200,2 -6.400,2c1.600,-1.400 2.600,-2.800 3,-4.600c-2,.8 -4,1 -6,.6c2,-1 3.400,-2.400 4.200,-4.200c-1.800,.2 -3.600,0 -5.200,-.8c4.800,-1 9.200,-3.800 12.200,-7.800z" fill="#d2b583" stroke="#7c5b2e" stroke-width=".9" stroke-linejoin="round"/>
<path d="M1527.4,151.400c-3,3.600 -7.600,6.200 -12,7M1530.400,154.400c-3,3.800 -7.200,6.800 -11.800,8.200M1532.800,157.600c-2.600,3.600 -6,6.400 -10,8" fill="none" stroke="#7c5b2e" stroke-width="1.1"/>
<!-- find -->
<ellipse cx="1578" cy="170.6" rx="12" ry="1.4" fill="#000" opacity=".1"/>
<path d="M1580.6,161.2l8.600,7" stroke="#3c3c3c" stroke-width="3.400" stroke-linecap="round"/>
<path d="M1579.8,160.400l2.400,2" stroke="#c9a063" stroke-width="2.400"/>
<circle cx="1572.4" cy="152.9" r="10.2" fill="#fcfcfc" stroke="#5c5c5c" stroke-width="2.2"/>
<text x="1566.1" y="159.400" font-family="Liberation Sans" font-size="17.500" fill="#8e8e8e">A</text>
<!-- pilcrow -->
<rect x="1607.600" y="170.400" width="33" height="2.200" rx="1" fill="#000" opacity=".12"/>
<rect x="1608.100" y="139" width="31.400" height="31.400" rx="5.500" fill="url(#btn)" stroke="#8c8c8c" stroke-width="2"/>
<path d="M1628.900,142.200h-8.200a5.700,5.600 0 0 0 0,11.200h.4v14.300h2v-24h4v24h1.800z" fill="#4a4a4a"/>
<!-- wrap -->
<rect x="1656" y="170.400" width="33" height="2.200" rx="1" fill="#000" opacity=".12"/>
<rect x="1656.300" y="139" width="31.200" height="31.400" rx="5.500" fill="url(#btn)" stroke="#8c8c8c" stroke-width="2"/>
<rect x="1663.200" y="148.300" width="11.600" height="3.400" fill="#666"/><path d="M1677.400,149.200h2.600v9.800h-5.200" fill="none" stroke="#444" stroke-width="1.800"/><path d="M1666.900,158.800l7.900,-4.700v9.600z" fill="#444"/>
</svg>
<div class="t" style="left:1076px;top:144px;font-size:22px;color:#1f1f1f;letter-spacing:.92px" id="tLimit">Limit to 200 rows</div>

<div class="t code ln" style="left:502px;top:191.5px;width:32px;text-align:right;letter-spacing:-2px" id="ln0">1</div>
<div class="t code cl" style="left:613px;top:191.5px" id="cl0"><b class="k">CREATE TABLE</b> <span class="i">`test`</span><span class="p">.</span><span class="i">`test_table`</span> <span class="p">(</span></div>
<div class="t code ln" style="left:502px;top:233.5px;width:32px;text-align:right;letter-spacing:-2px" id="ln1">2</div>
<div class="t code cl" style="left:644px;top:233.5px" id="cl1"><span class="i">`id`</span> <b class="k">INT NOT NULL AUTO_INCREMENT</b><span class="p">,</span></div>
<div class="t code ln" style="left:502px;top:275.5px;width:32px;text-align:right;letter-spacing:-2px" id="ln2">3</div>
<div class="t code cl" style="left:644px;top:275.5px" id="cl2"><span class="i">`test_co`</span> <b class="k">VARCHAR</b><span class="p">(</span><span class="n">255</span><span class="p">)</span> <b class="k">NULL</b><span class="p">,</span></div>
<div class="t code ln" style="left:502px;top:317.5px;width:32px;text-align:right;letter-spacing:-2px" id="ln3">4</div>
<div class="t code cl" style="left:675px;top:317.5px" id="cl3"><b class="k">PRIMARY KEY</b> <span class="p">(</span><span class="i">`id`</span><span class="p">));</span></div>
<svg class="abs" style="left:570px;top:195px" width="40" height="110" viewBox="570 195 40 110"><g fill="none" stroke="#a8a898" stroke-width="1.7"><circle cx="586.8" cy="210.900" r="11.100" fill="#fff"/><path d="M581,210.900h11.600"/><path d="M586.8,222v66c0,5.200 3.200,7.600 8,7.600h3.600"/></g></svg>

<div class="t" style="left:480px;top:729px;font-size:20px;color:#222;letter-spacing:.6px" id="tPct">100%</div>
<svg class="abs" style="left:582px;top:726px" width="20" height="28" viewBox="582 726 20 28"><path d="M586.2,735.4l6,-5.800l6,5.800M586.2,743.4l6,5.800l6,-5.800" fill="none" stroke="#2a2a2a" stroke-width="2.6" stroke-linecap="round" stroke-linejoin="round"/></svg>
<div class="abs" style="left:614px;top:725px;width:2px;height:29px;background:#bcbcbc"></div>
<div class="abs" style="left:716px;top:725px;width:2px;height:29px;background:#bcbcbc"></div>
<div class="t" style="left:642px;top:729px;font-size:20px;color:#222;letter-spacing:1.1px" id="tPos">25:4</div>
<div class="t" style="left:470.500px;top:807px;font-size:22px;color:#222;letter-spacing:.95px" id="tAO">Action Output</div>
<svg class="abs" style="left:678px;top:806px" width="18" height="24" viewBox="678 806 18 24"><path d="M682.600,814.600l4.200,-4l4.200,4M682.600,820l4.200,4l4.200,-4" fill="none" stroke="#3a3a3a" stroke-width="2" stroke-linecap="round" stroke-linejoin="round"/></svg>

<div class="abs" style="left:538px;top:855px;width:2px;height:31px;background:#dedede"></div>
<div class="abs" style="left:604px;top:855px;width:2px;height:31px;background:#dedede"></div>
<div class="abs" style="left:738px;top:855px;width:2px;height:31px;background:#dedede"></div>
<div class="abs" style="left:1046px;top:855px;width:2px;height:31px;background:#dedede"></div>
<div class="t ot" style="left:616.500px;top:860.500px;letter-spacing:.55px" id="hTime">Time</div>
<div class="t ot" style="left:750.500px;top:860.500px;letter-spacing:.8px" id="hAction">Action</div>
<div class="t ot" style="left:1059px;top:860.500px;letter-spacing:.6px" id="hResp">Response</div>
<div class="row" style="top:906px;background:#f4f5f5;height:35px"></div>
<div class="t ot" style="left:546px;top:912px;letter-spacing:2.800px;" id="rn0">62</div><div class="t ot" style="left:612px;top:912px;letter-spacing:.75px;" id="rt0">21:37:33</div><div class="t ot" style="left:746px;top:912px;letter-spacing:.82px;" id="ra0">use sys</div><div class="t ot" style="left:1054px;top:912px;letter-spacing:1.040px;" id="rr0">0 row(s) affected</div>
<div class="row" style="top:942px;background:transparent"></div>
<div class="t ot" style="left:546px;top:948px;letter-spacing:2.800px;" id="rn1">63</div><div class="t ot" style="left:612px;top:948px;letter-spacing:.75px;" id="rt1">21:37:36</div><div class="t ot" style="left:746px;top:948px;letter-spacing:.82px;" id="ra1">show tables</div><div class="t ot" style="left:1054px;top:948px;letter-spacing:.65px;" id="rr1">101 row(s) returned</div>
<div class="row" style="top:978px;background:#f4f5f5;height:35px"></div>
<div class="t ot" style="left:546px;top:984px;letter-spacing:2.800px;" id="rn2">64</div><div class="t ot" style="left:612px;top:984px;letter-spacing:.75px;" id="rt2">21:38:02</div><div class="t ot" style="left:746px;top:984px;letter-spacing:.82px;" id="ra2">show tables</div><div class="t ot" style="left:1054px;top:984px;letter-spacing:.65px;" id="rr2">101 row(s) returned</div>
<div class="row" style="top:1014px;background:transparent"></div>
<div class="t ot" style="left:546px;top:1020px;letter-spacing:2.800px;" id="rn3">65</div><div class="t ot" style="left:612px;top:1020px;letter-spacing:.75px;" id="rt3">21:39:44</div><div class="t ot" style="left:746px;top:1020px;letter-spacing:.82px;" id="ra3">desc sys_config</div><div class="t ot" style="left:1054px;top:1020px;letter-spacing:1.040px;" id="rr3">4 row(s) returned</div>
<div class="row" style="top:1050px;background:#f4f5f5;height:35px"></div>
<div class="t ot" style="left:546px;top:1056px;letter-spacing:2.800px;" id="rn4">66</div><div class="t ot" style="left:612px;top:1056px;letter-spacing:.75px;" id="rt4">21:40:25</div><div class="t ot" style="left:746px;top:1056px;letter-spacing:.82px;" id="ra4">select * from sys_config L...</div><div class="t ot" style="left:1054px;top:1056px;letter-spacing:1.040px;" id="rr4">6 row(s) returned</div>
<div class="row" style="top:1086px;background:transparent"></div>
<div class="t ot" style="left:546px;top:1092px;letter-spacing:2.800px;" id="rn5">67</div><div class="t ot" style="left:612px;top:1092px;letter-spacing:.75px;" id="rt5">11:38:20</div><div class="t ot" style="left:746px;top:1092px;letter-spacing:.82px;" id="ra5">drop database test</div><div class="t ot" style="left:1054px;top:1092px;letter-spacing:.87px;" id="rr5">1 row(s) affected</div>
<div class="row" style="top:1122px;background:#f4f5f5;height:35px"></div>
<div class="t ot" style="left:546px;top:1128px;letter-spacing:2.800px;" id="rn6">68</div><div class="t ot" style="left:612px;top:1128px;letter-spacing:.75px;" id="rt6">11:39:22</div><div class="t ot" style="left:746px;top:1128px;letter-spacing:.82px;" id="ra6">create database test char...</div><div class="t ot" style="left:1054px;top:1128px;letter-spacing:.78px;" id="rr6">1 row(s) affected, 1 warning(s): 3719 'utf8' is currently an alias for the character set UTF8MB3</div>
<div class="row" style="top:1158px;background:transparent"></div>
<div class="t ot" style="left:546px;top:1164px;letter-spacing:2.800px;" id="rn7">69</div><div class="t ot" style="left:612px;top:1164px;letter-spacing:.75px;" id="rt7">11:40:06</div><div class="t ot" style="left:746px;top:1164px;letter-spacing:.82px;" id="ra7">drop database test</div><div class="t ot" style="left:1054px;top:1164px;letter-spacing:1.040px;" id="rr7">0 row(s) affected</div>
<div class="row" style="top:1194px;background:#f4f5f5;height:35px"></div>
<div class="t ot" style="left:546px;top:1200px;letter-spacing:2.800px;" id="rn8">70</div><div class="t ot" style="left:612px;top:1200px;letter-spacing:.75px;" id="rt8">11:40:21</div><div class="t ot" style="left:746px;top:1200px;letter-spacing:.82px;" id="ra8">create database test char...</div><div class="t ot" style="left:1054px;top:1200px;letter-spacing:.87px;" id="rr8">1 row(s) affected</div>
<div class="row" style="top:1230px;background:#2c60d6"></div>
<div class="t ot" style="left:546px;top:1236px;letter-spacing:.8px;color:#fff;" id="rn9">71</div><div class="t ot" style="left:612px;top:1236px;letter-spacing:.75px;color:#fff;" id="rt9">11:47:08</div><div class="t ot" style="left:746px;top:1236px;letter-spacing:.62px;color:#fff;" id="ra9">CREATE TABLE `test`.`te...</div><div class="t ot" style="left:1054px;top:1236px;letter-spacing:1.040px;color:#fff;" id="rr9">0 row(s) affected</div>
<div class="row" style="top:1267px;background:#f4f5f5;height:20px"></div>
<svg class="abs" style="left:496px;top:900px" width="40" height="386" viewBox="496 900 40 386"><defs><linearGradient id="okg" x1="0" y1="0" x2="0" y2="1"><stop offset="0" stop-color="#55bd4e"/><stop offset="1" stop-color="#2a9a2c"/></linearGradient><linearGradient id="wg" x1="0" y1="0" x2="0" y2="1"><stop offset="0" stop-color="#f6f07a"/><stop offset="1" stop-color="#eee23a"/></linearGradient></defs><circle cx="514.8" cy="923.2" r="10.300" fill="url(#okg)" stroke="#2f8c2c" stroke-width="1.300"/><path d="M509.800,923.6l3.500,3.700l6.800,-7.800" fill="none" stroke="#fff" stroke-width="2.700"/><circle cx="514.8" cy="959.2" r="10.300" fill="url(#okg)" stroke="#2f8c2c" stroke-width="1.300"/><path d="M509.800,959.6l3.500,3.700l6.800,-7.800" fill="none" stroke="#fff" stroke-width="2.700"/><circle cx="514.8" cy="995.2" r="10.300" fill="url(#okg)" stroke="#2f8c2c" stroke-width="1.300"/><path d="M509.800,995.6l3.500,3.700l6.800,-7.800" fill="none" stroke="#fff" stroke-width="2.700"/><circle cx="514.8" cy="1031.2" r="10.300" fill="url(#okg)" stroke="#2f8c2c" stroke-width="1.300"/><path d="M509.800,1031.6l3.500,3.700l6.800,-7.800" fill="none" stroke="#fff" stroke-width="2.700"/><circle cx="514.8" cy="1067.2" r="10.300" fill="url(#okg)" stroke="#2f8c2c" stroke-width="1.300"/><path d="M509.800,1067.6l3.500,3.700l6.800,-7.800" fill="none" stroke="#fff" stroke-width="2.700"/><circle cx="514.8" cy="1103.2" r="10.300" fill="url(#okg)" stroke="#2f8c2c" stroke-width="1.300"/><path d="M509.800,1103.6l3.500,3.700l6.800,-7.800" fill="none" stroke="#fff" stroke-width="2.700"/><path d="M515,1127.7l11.800,21.400h-23.600z" fill="url(#wg)" stroke="#585848" stroke-width="1.600" stroke-linejoin="round"/><path d="M515,1135.4v7.400" stroke="#333" stroke-width="2"/><circle cx="515" cy="1145.6" r="1.200" fill="#333"/><circle cx="514.8" cy="1175.2" r="10.300" fill="url(#okg)" stroke="#2f8c2c" stroke-width="1.300"/><path d="M509.800,1175.6l3.500,3.700l6.800,-7.800" fill="none" stroke="#fff" stroke-width="2.700"/><circle cx="514.8" cy="1211.2" r="10.300" fill="url(#okg)" stroke="#2f8c2c" stroke-width="1.300"/><path d="M509.800,1211.6l3.500,3.700l6.800,-7.800" fill="none" stroke="#fff" stroke-width="2.700"/><circle cx="514.8" cy="1247.2" r="10.300" fill="url(#okg)" stroke="#2f8c2c" stroke-width="1.300"/><path d="M509.800,1247.6l3.500,3.700l6.800,-7.800" fill="none" stroke="#fff" stroke-width="2.700"/></svg>

<div class="abs" id="outBorderB"></div>
</div>
</body>
</html>
